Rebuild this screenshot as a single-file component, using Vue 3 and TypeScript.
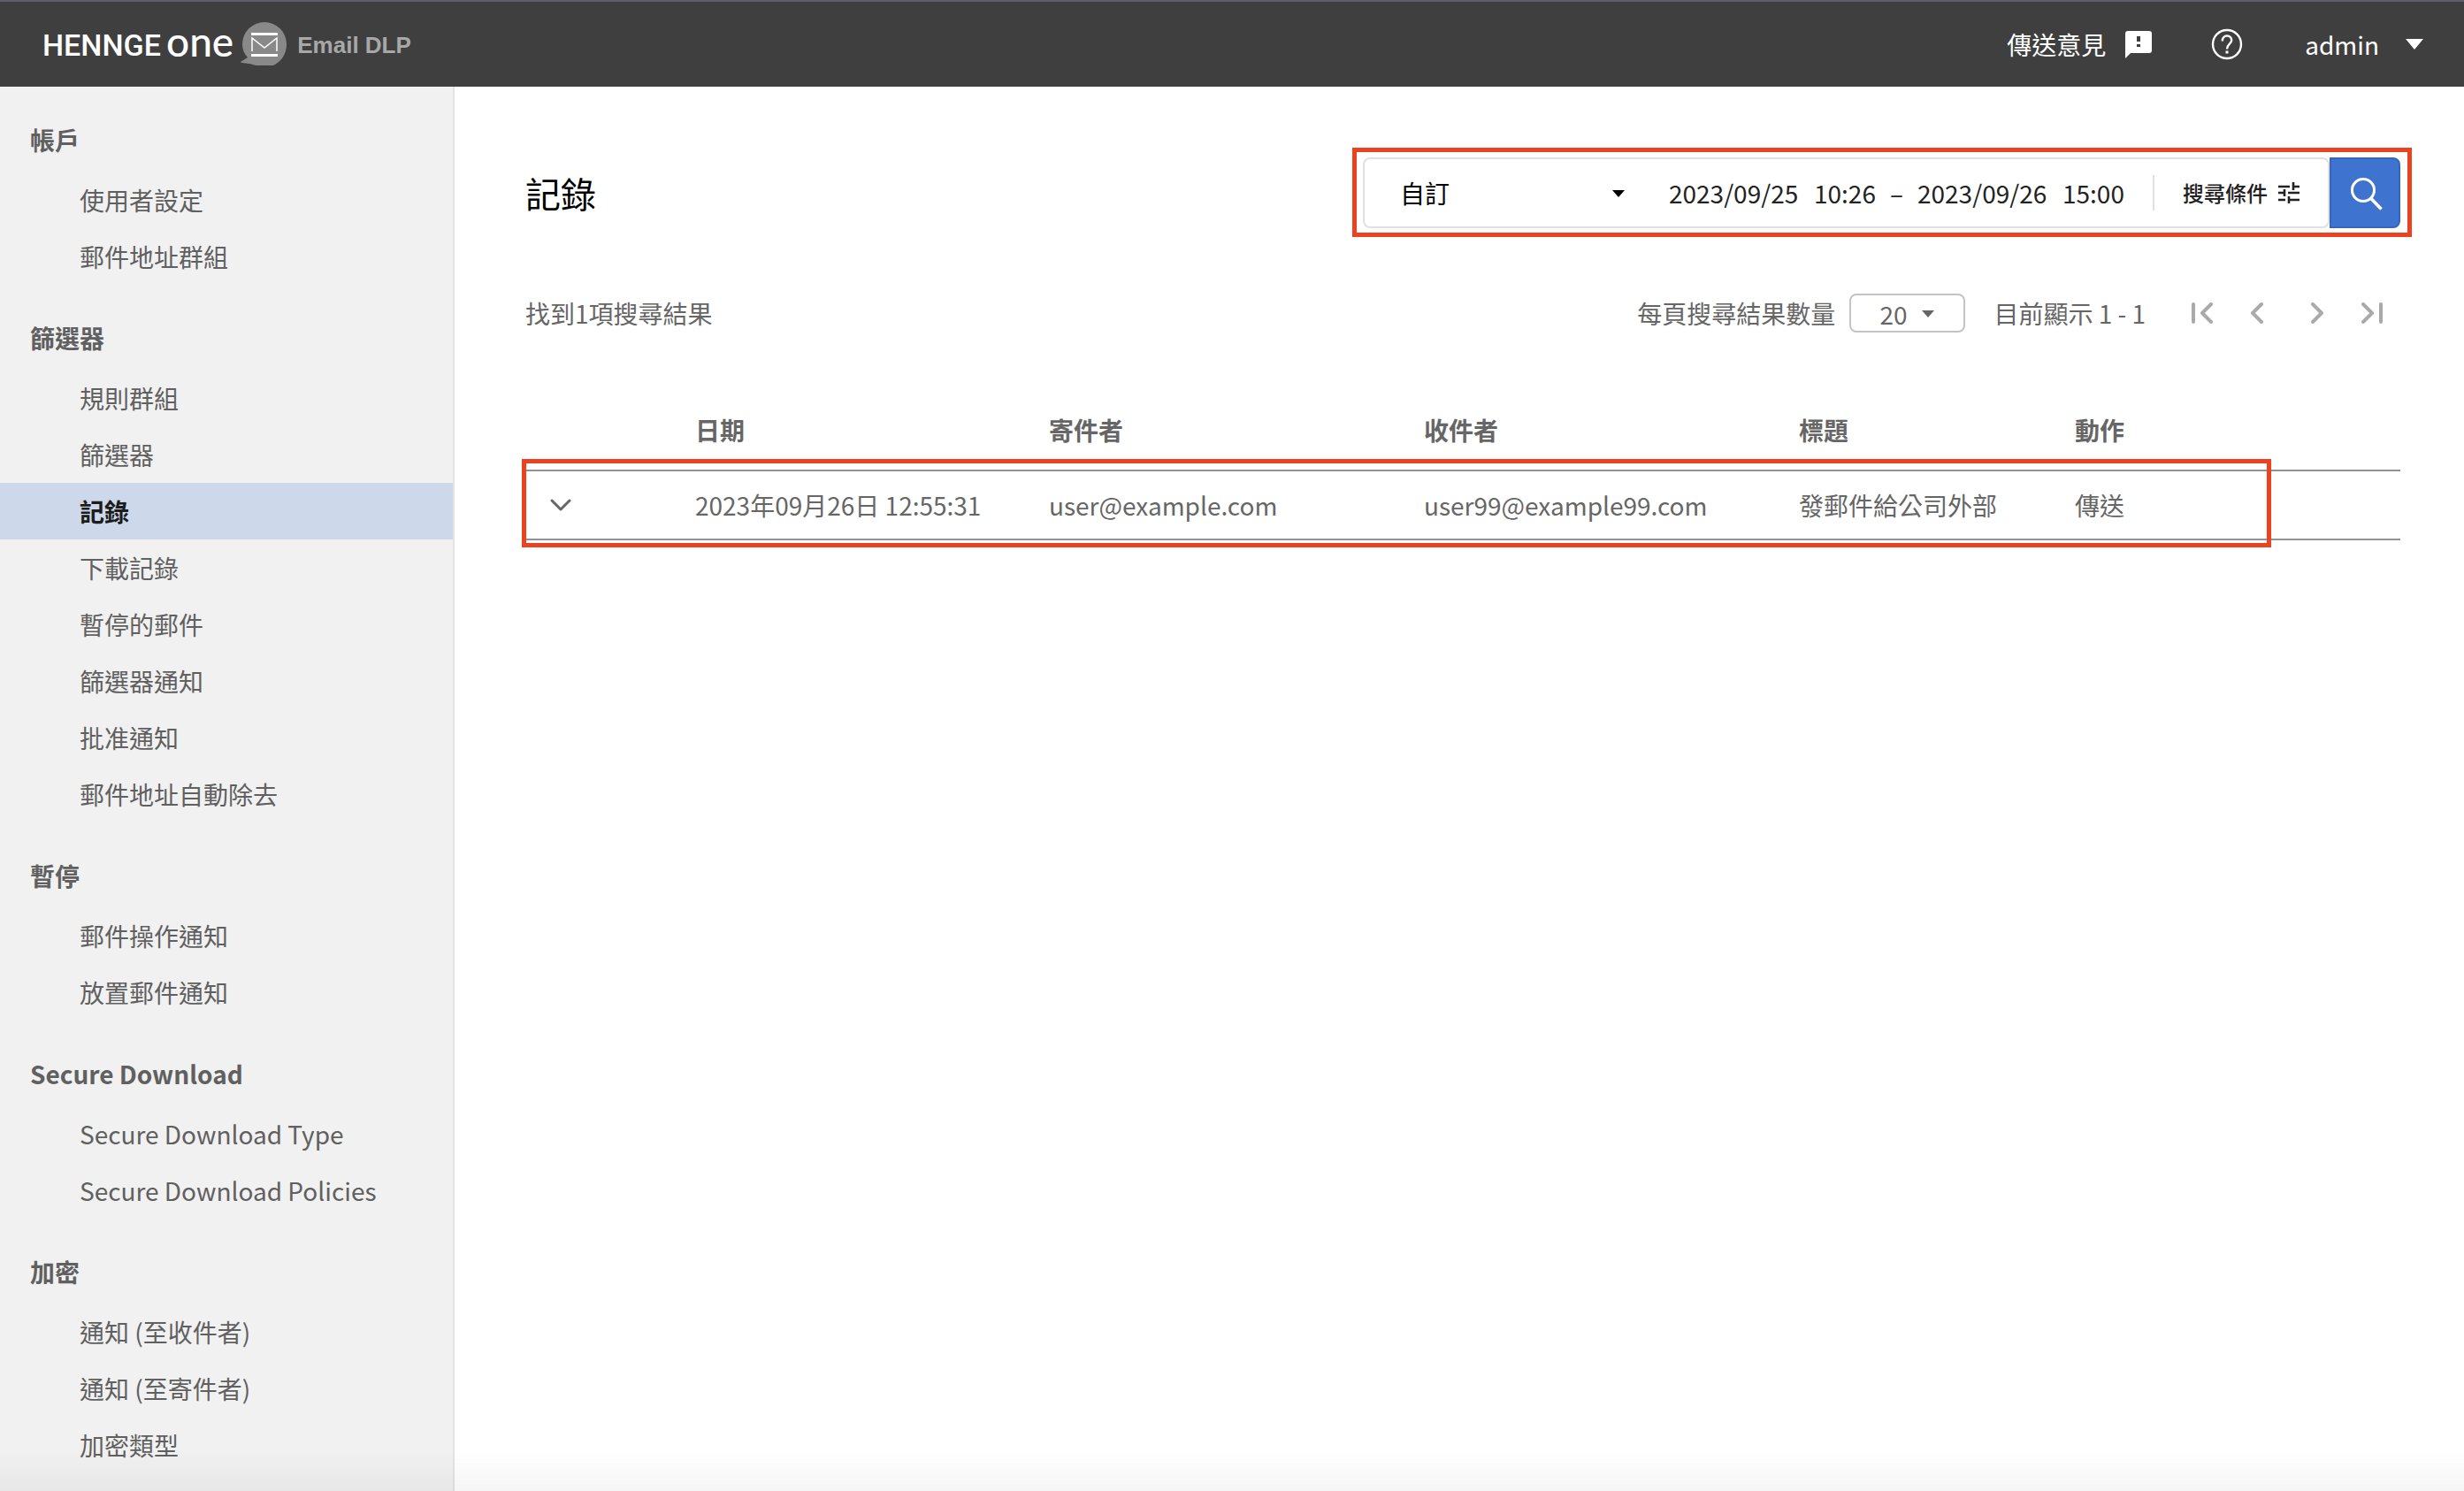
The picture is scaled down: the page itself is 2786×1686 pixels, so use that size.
<script setup lang="ts">
import { ref } from 'vue'

interface NavGroup {
  title: string
  items: string[]
}

interface LogRow {
  date: string
  sender: string
  recipient: string
  subject: string
  action: string
}

const groups: NavGroup[] = [
  { title: '帳戶', items: ['使用者設定', '郵件地址群組'] },
  {
    title: '篩選器',
    items: ['規則群組', '篩選器', '記錄', '下載記錄', '暫停的郵件', '篩選器通知', '批准通知', '郵件地址自動除去'],
  },
  { title: '暫停', items: ['郵件操作通知', '放置郵件通知'] },
  { title: 'Secure Download', items: ['Secure Download Type', 'Secure Download Policies'] },
  { title: '加密', items: ['通知 (至收件者)', '通知 (至寄件者)', '加密類型'] },
]

const rows: LogRow[] = [
  {
    date: '2023年09月26日 12:55:31',
    sender: 'user@example.com',
    recipient: 'user99@example99.com',
    subject: '發郵件給公司外部',
    action: '傳送',
  },
]

const active = ref('記錄')
const range = ref('自訂')
const pageSize = ref('20')
const fromDate = ref('2023/09/25')
const fromTime = ref('10:26')
const toDate = ref('2023/09/26')
const toTime = ref('15:00')
</script>

<template>
  <div class="app">
    <header class="topbar">
      <a class="brand" href="#">
        <span class="brand-name">HENNGE</span>
        <span class="brand-one">one</span>
        <svg class="brand-icon" width="52" height="50" viewBox="0 0 52 50" aria-hidden="true">
          <path d="M17 49C11 47 8 46.500 1 46L0 45L8 40C4 36 2 31 2 25A25 25 0 0 1 52 25C52 36 46 45 37 49Z" fill="#898989" />
          <path d="M12 12H42V15H12ZM12 36H42V39H12Z" fill="#fff" />
          <path d="M13 33V18L27 29L41 18V33" fill="none" stroke="#fff" stroke-width="1.500" />
        </svg>
        <span class="brand-product">Email DLP</span>
      </a>
      <div class="topbar-actions">
        <a class="feedback" href="#">
          傳送意見
          <svg width="30" height="32" viewBox="0 0 30 32" aria-hidden="true">
            <path d="M3 1H27A3 3 0 0 1 30 4V23A3 3 0 0 1 27 26H6L0 32V4A3 3 0 0 1 3 1ZM13 7V13H17V7ZM13 16V19H17V16Z" fill="#fff" fill-rule="evenodd" />
          </svg>
        </a>
        <button class="help" type="button" aria-label="說明">
          <svg width="36" height="36" viewBox="0 0 36 36" fill="none" stroke="#fff" stroke-width="2.400" aria-hidden="true">
            <circle cx="18" cy="18" r="16" />
            <path d="M12.800 14.500C12.800 10.500 15 8.500 18 8.500C21 8.500 23.200 10.500 23.200 13.500C23.200 17.500 18 18 18 23.500" />
            <path d="M16.500 27H19.500" stroke-width="3" />
          </svg>
        </button>
        <button class="account" type="button">
          admin
          <svg width="20" height="12" viewBox="0 0 20 12" aria-hidden="true"><path d="M0 0H20L10 12Z" fill="#fff" /></svg>
        </button>
      </div>
    </header>

    <div class="body">
      <nav class="sidebar">
        <section v-for="group in groups" :key="group.title">
          <h2 class="nav-title">{{ group.title }}</h2>
          <ul class="nav-list">
            <li v-for="item in group.items" :key="item">
              <a class="nav-item" :class="{ active: item === active }" href="#" @click.prevent="active = item">{{ item }}</a>
            </li>
          </ul>
        </section>
      </nav>

      <main class="content">
        <div class="title-row">
          <h1>記錄</h1>
          <form class="search" @submit.prevent>
            <div class="search-box">
              <div class="range">
                <select v-model="range" aria-label="期間">
                  <option>自訂</option>
                </select>
                <svg width="14" height="8" viewBox="0 0 14 8" aria-hidden="true"><path d="M0 0H14L7 8Z" fill="#000" /></svg>
              </div>
              <div class="period">
                <input v-model="fromDate" class="date" type="text" aria-label="開始日期" />
                <input v-model="fromTime" class="time" type="text" aria-label="開始時間" />
                <span class="dash">–</span>
                <input v-model="toDate" class="date" type="text" aria-label="結束日期" />
                <input v-model="toTime" class="time" type="text" aria-label="結束時間" />
              </div>
              <button class="conditions" type="button">
                搜尋條件
                <svg width="24" height="24" viewBox="0 0 24 24" fill="none" stroke="#222" stroke-width="2.600" aria-hidden="true">
                  <path d="M0 5H13M17 5H24M17 0V9M0 12H6M11 12H24M7 8V16M0 20H8M12 20H24M12 16V24" />
                </svg>
              </button>
            </div>
            <button class="search-button" type="submit" aria-label="搜尋">
              <svg width="40" height="40" viewBox="0 0 40 40" fill="none" stroke="#fff" aria-hidden="true">
                <circle cx="18" cy="17" r="12.500" stroke-width="3" />
                <path d="M26.500 26L38.500 38.500" stroke-width="3.600" />
              </svg>
            </button>
            <span class="highlight highlight-search"></span>
          </form>
        </div>

        <div class="results-row">
          <span>找到1項搜尋結果</span>
          <div class="pager">
            <label for="page-size">每頁搜尋結果數量</label>
            <div class="page-size">
              <select id="page-size" v-model="pageSize">
                <option>20</option>
              </select>
              <svg width="14" height="8" viewBox="0 0 14 8" aria-hidden="true"><path d="M0 0H14L7 8Z" fill="#666" /></svg>
            </div>
            <span class="showing">目前顯示 1 - 1</span>
            <div class="page-buttons">
              <button type="button" aria-label="第一頁">
                <svg viewBox="0 0 24 24"><path d="M2 2V22M22 2L12 12L22 22" /></svg>
              </button>
              <button type="button" aria-label="上一頁">
                <svg viewBox="0 0 24 24"><path d="M15 2L5 12L15 22" /></svg>
              </button>
              <button type="button" aria-label="下一頁">
                <svg viewBox="0 0 24 24"><path d="M9 2L19 12L9 22" /></svg>
              </button>
              <button type="button" aria-label="最後一頁">
                <svg viewBox="0 0 24 24"><path d="M2 2L12 12L2 22M22 2V22" /></svg>
              </button>
            </div>
          </div>
        </div>

        <table class="logs">
          <colgroup>
            <col class="col-expand" />
            <col class="col-date" />
            <col class="col-address" />
            <col class="col-address" />
            <col class="col-subject" />
            <col />
          </colgroup>
          <thead>
            <tr>
              <th></th>
              <th scope="col">日期</th>
              <th scope="col">寄件者</th>
              <th scope="col">收件者</th>
              <th scope="col">標題</th>
              <th scope="col">動作</th>
            </tr>
          </thead>
          <tbody>
            <tr v-for="row in rows" :key="row.date">
              <td>
                <button class="expand" type="button" aria-label="展開">
                  <svg width="24" height="14" viewBox="0 0 24 14" fill="none" stroke="#666" stroke-width="3" stroke-linecap="round" stroke-linejoin="round" aria-hidden="true">
                    <path d="M2 2L12 12L22 2" />
                  </svg>
                </button>
                <span class="highlight highlight-row"></span>
              </td>
              <td>{{ row.date }}</td>
              <td>{{ row.sender }}</td>
              <td>{{ row.recipient }}</td>
              <td>{{ row.subject }}</td>
              <td>{{ row.action }}</td>
            </tr>
          </tbody>
        </table>
      </main>
    </div>
    <div class="bottom-shade"></div>
  </div>
</template>

<style>
body {
  margin: 0;
  background: #fff;
}
</style>

<style scoped>
.app {
  display: flex;
  flex-direction: column;
  min-height: 100vh;
  font-family: 'Noto Sans CJK TC', 'Noto Sans', sans-serif;
  font-size: 28px;
  line-height: 42px;
  color: #666;
}

.app *,
.app *::before {
  box-sizing: border-box;
}

button,
input,
select {
  margin: 0;
  padding: 0;
  border: 0;
  background: none;
  font: inherit;
  color: inherit;
  appearance: none;
}

a {
  color: inherit;
  text-decoration: none;
}

svg {
  display: block;
  flex: none;
}

.topbar {
  display: flex;
  align-items: center;
  justify-content: space-between;
  height: 98px;
  padding: 0 46px 0 48px;
  border-top: 2px solid #5f5f67;
  background: #3f3f3f;
  color: #fff;
}

.brand {
  display: flex;
  align-items: center;
}

.brand-name {
  padding-top: 2px;
  font-family: Roboto, sans-serif;
  font-size: 34px;
  font-weight: 500;
}

.brand-one {
  margin: 0 8px 0 6px;
  padding-bottom: 6px;
  font-family: Lato, sans-serif;
  font-size: 46px;
  font-weight: 500;
}

.brand-product {
  margin-left: 12px;
  padding-top: 2px;
  font-family: 'Liberation Sans', Arial, sans-serif;
  font-size: 26px;
  font-weight: 700;
  color: #a8a8a8;
}

.topbar-actions {
  display: flex;
  align-items: center;
}

.feedback,
.account {
  display: flex;
  align-items: center;
}

.feedback {
  gap: 22px;
}

.help {
  margin: 0 70px 0 67px;
}

.account {
  gap: 30px;
}

.body {
  flex: 1;
  display: flex;
}

.sidebar {
  flex: none;
  width: 514px;
  border-right: 2px solid #e4e4e4;
  background: #f1f1f1;
  color: #606060;
}

.nav-title {
  margin: 0;
  padding: 39px 34px 15px;
  font-size: 28px;
  font-weight: 700;
}

.nav-list {
  margin: 0;
  padding: 0;
  list-style: none;
}

.nav-item {
  display: block;
  padding-left: 90px;
  line-height: 64px;
}

.nav-item.active {
  background: #cdd8ea;
  font-weight: 700;
  color: #1c1c1c;
}

.content {
  flex: 1;
  min-width: 0;
  padding: 80px 72px 0 80px;
}

.title-row,
.results-row {
  display: flex;
  align-items: center;
  justify-content: space-between;
}

h1 {
  margin: 0;
  font-size: 40px;
  font-weight: 400;
  line-height: 60px;
  color: #000;
}

.search {
  position: relative;
  display: flex;
}

.search-box {
  display: flex;
  align-items: center;
  height: 80px;
  border: 2px solid #e0e0e0;
  border-radius: 8px;
  color: #222;
}

.range {
  position: relative;
  color: #000;
}

.range select {
  display: block;
  width: 312px;
  padding-left: 40px;
  line-height: 42px;
}

.range svg {
  position: absolute;
  right: 18px;
  top: 18px;
  pointer-events: none;
}

.period {
  display: flex;
  gap: 16px;
  padding: 0 32px 0 32px;
}

.period input {
  display: block;
  height: 42px;
}

.date {
  width: 148px;
}

.time {
  width: 70px;
}

.conditions {
  display: flex;
  align-items: center;
  gap: 12px;
  height: 40px;
  padding: 0 32px;
  border-left: 2px solid #e0e0e0;
  font-size: 24px;
  font-weight: 500;
}

.search-button {
  display: grid;
  place-items: center;
  width: 80px;
  height: 80px;
  border: 2px solid #3566b8;
  border-radius: 0 8px 8px 0;
  background: #3e74d0;
}

.highlight {
  position: absolute;
  border: 5px solid #ec421f;
  pointer-events: none;
}

.highlight-search {
  inset: -11px -13px -10px -12px;
}

.results-row {
  margin-top: 74px;
}

.pager {
  display: flex;
  align-items: center;
}

.page-size {
  position: relative;
  margin: 0 32px 0 16px;
}

.page-size select {
  display: block;
  width: 131px;
  height: 44px;
  padding: 0 0 4px 32px;
  border: 2px solid #c4c4c4;
  border-radius: 8px;
}

.page-size svg {
  position: absolute;
  right: 35px;
  top: 19px;
  pointer-events: none;
}

.page-buttons {
  display: flex;
  gap: 40px;
  margin: 0 20px 0 52px;
}

.page-buttons svg {
  width: 24px;
  height: 24px;
  fill: none;
  stroke: #aaa;
  stroke-width: 4;
  stroke-linecap: round;
  stroke-linejoin: round;
}

.logs {
  width: 100%;
  margin-top: 80px;
  border-collapse: separate;
  border-spacing: 0;
  table-layout: fixed;
}

.col-expand {
  width: 192px;
}

.col-date {
  width: 400px;
}

.col-address {
  width: 424px;
}

.col-subject {
  width: 312px;
}

th,
td {
  padding: 0;
  text-align: left;
}

th {
  height: 75px;
  padding-bottom: 15px;
  font-weight: 700;
}

tbody tr {
  position: relative;
}

td {
  height: 80px;
  border-top: 2px solid #929292;
  border-bottom: 2px solid #929292;
}

.expand {
  display: block;
  padding: 8px 28px;
}

.highlight-row {
  inset: -12px 146px -8px -4px;
}

.bottom-shade {
  position: fixed;
  inset: auto 0 0 0;
  height: 48px;
  background: linear-gradient(transparent, rgba(0, 0, 0, 0.04));
  pointer-events: none;
}
</style>
